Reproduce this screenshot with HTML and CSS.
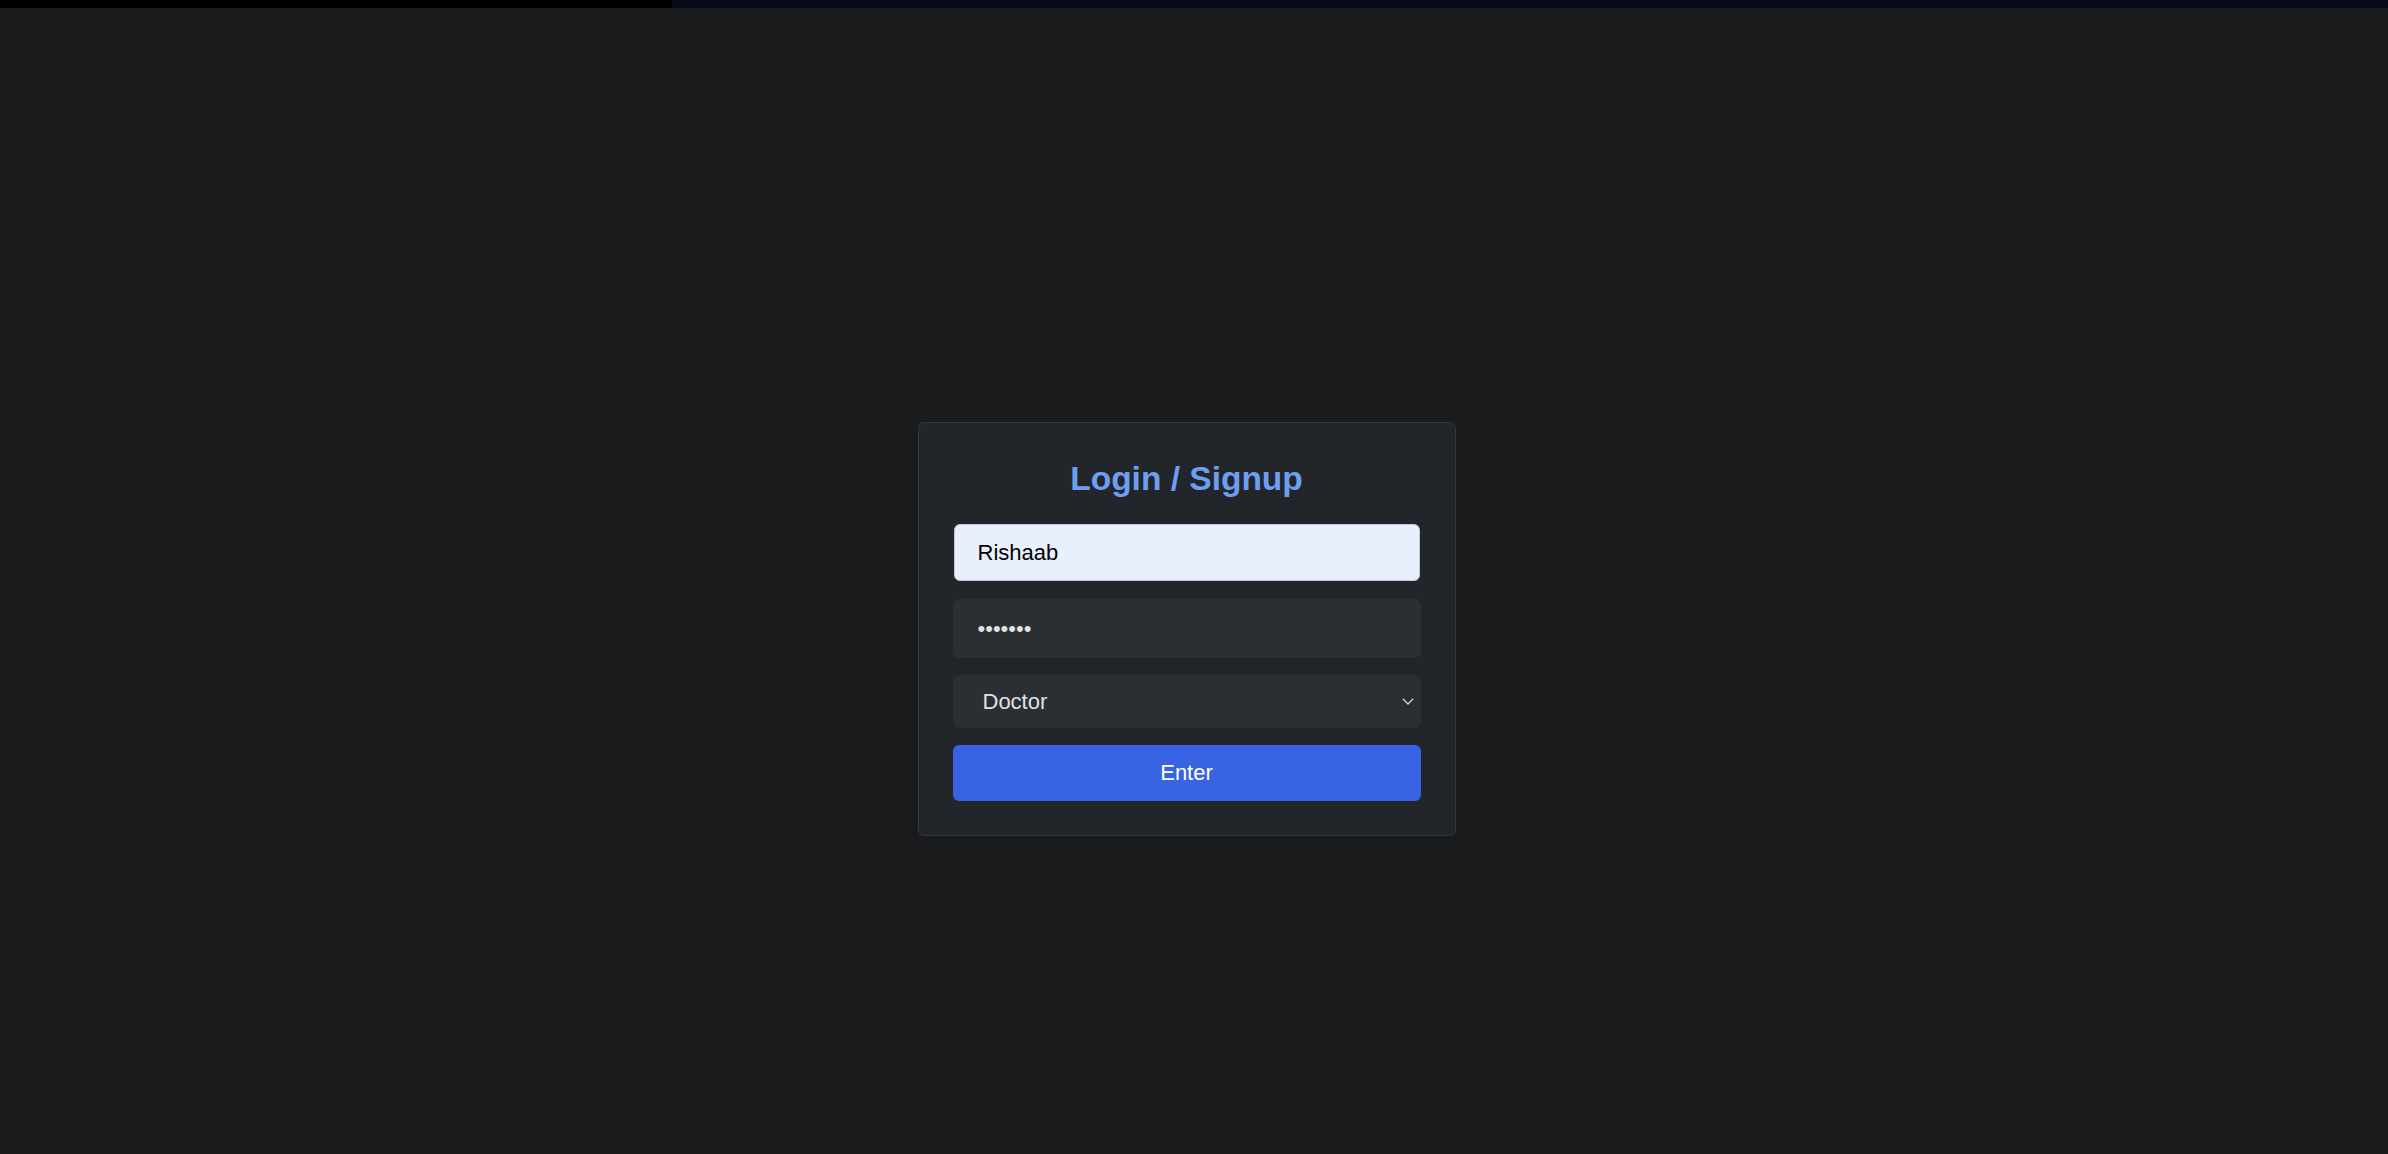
FILE: index.html
```html
<!DOCTYPE html>
<html lang="en">
<head>
<meta charset="utf-8">
<title>Login / Signup</title>
<link rel="stylesheet" href="styles.css">
</head>
<body>
<div class="progress">
  <div class="progress-done"></div>
  <div class="progress-rest"></div>
</div>
<main class="stage">
  <form class="card">
    <h2 class="title">Login / Signup</h2>
    <input class="field field-user" type="text" value="Rishaab">
    <input class="field field-pass" type="password" value="1234567">
    <select class="field field-select">
      <option>Doctor</option>
      <option>Patient</option>
    </select>
    <button class="btn" type="button">Enter</button>
  </form>
</main>
</body>
</html>
```

FILE: styles.css
```css
* { box-sizing: border-box; }

html, body {
  margin: 0;
  padding: 0;
  height: 100%;
}

body {
  background: #1a1b1d;
  font-family: "Liberation Sans", Arial, sans-serif;
  overflow: hidden;
}

.progress {
  display: flex;
  height: 8px;
}

.progress-done {
  width: 672px;
  background: #000000;
}

.progress-rest {
  flex: 1;
  background: #0a0b19;
}

.stage {
  display: flex;
  justify-content: center;
  align-items: flex-start;
  padding-top: 414px;
  padding-right: 15px;
}

.card {
  width: 538px;
  background: #222529;
  border: 1px solid #33363a;
  border-radius: 6px;
  padding: 34px 34px 34px;
  display: flex;
  flex-direction: column;
}

.title {
  margin: 1px 0 25px;
  font-size: 33.5px;
  line-height: 41px;
  font-weight: 700;
  color: #6c9ff0;
  text-align: center;
}

.field {
  display: block;
  width: 100%;
  font-family: "Liberation Sans", Arial, sans-serif;
  font-size: 22px;
  border-radius: 6px;
  outline: none;
  margin: 0;
}

.field-user {
  width: 466px;
  margin: 0 1px;
  height: 57px;
  background: #e8f0fe;
  border: 1px solid #c3c7cd;
  color: #000000;
  padding: 0 23px;
}

.field-pass {
  margin-top: 18px;
  height: 59px;
  background: #2b2e33;
  border: 1px solid #2b2e33;
  color: #dee2e6;
  padding: 0 24px;
}

.field-select {
  margin-top: 17px;
  height: 53px;
  background-color: #2b2e33;
  border: 1px solid #2b2e33;
  color: #dee2e6;
  padding: 0 40px 0 29px;
  -webkit-appearance: none;
  appearance: none;
  background-image: url("data:image/svg+xml,%3Csvg xmlns='http://www.w3.org/2000/svg' width='12' height='7' viewBox='0 0 12 7'%3E%3Cpath d='M0.8 0.8 L6 6 L11.2 0.8' fill='none' stroke='%23c9cbcf' stroke-width='1.4'/%3E%3C/svg%3E");
  background-repeat: no-repeat;
  background-position: right 6px center;
  background-size: 12px 7px;
}

.btn {
  margin-top: 17px;
  height: 56px;
  width: 100%;
  background: #3863e2;
  border: none;
  border-radius: 6px;
  color: #ffffff;
  font-family: "Liberation Sans", Arial, sans-serif;
  font-size: 22px;
  cursor: pointer;
}
```
